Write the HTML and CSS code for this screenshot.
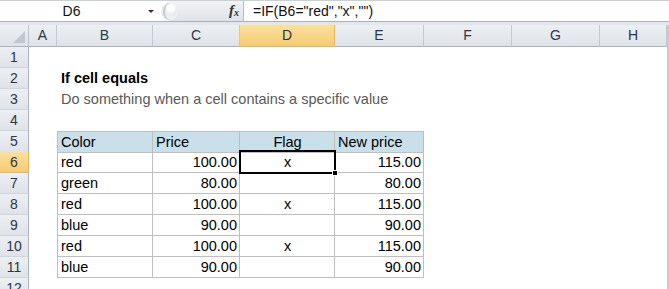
FILE: index.html
```html
<!DOCTYPE html>
<html>
	<head>
		<meta charset="utf-8" />
		<title>If cell equals</title>
		<link rel="stylesheet" href="styles.css">
	</head>
	<body>

<div class="fbar">
    <div class="namebox">D6<span class="drop"></span></div>
    <div class="fxzone"><span class="knob"></span><span class="fx">f<i>x</i></span></div>
    <div class="formula">=IF(B6="red","x","")</div>
</div>
<div class="gap"></div>

<div class="sheet">
    <div class="row head">
        <div class="corner"><span class="tri"></span></div>
        <div class="col">A</div>
        <div class="col">B</div>
        <div class="col">C</div>
        <div class="col on">D</div>
        <div class="col">E</div>
        <div class="col">F</div>
        <div class="col">G</div>
        <div class="col">H</div>
    </div>
    <div class="row"><div class="rh">1</div></div>
    <div class="row"><div class="rh">2</div><div></div><div class="title">If cell equals</div></div>
    <div class="row"><div class="rh">3</div><div></div><div class="sub">Do something when a cell contains a specific value</div></div>
    <div class="row"><div class="rh">4</div></div>
    <div class="row thead">
        <div class="rh">5</div><div></div>
        <div class="c first">Color</div>
        <div class="c">Price</div>
        <div class="c mid">Flag</div>
        <div class="c">New price</div>
    </div>
    <div class="row">
        <div class="rh on">6</div><div></div>
        <div class="c first">red</div>
        <div class="c num">100.00</div>
        <div class="c mid sel">x<span class="frame"></span><span class="handle"></span></div>
        <div class="c num">115.00</div>
    </div>
    <div class="row">
        <div class="rh">7</div><div></div>
        <div class="c first">green</div>
        <div class="c num">80.00</div>
        <div class="c mid"></div>
        <div class="c num">80.00</div>
    </div>
    <div class="row">
        <div class="rh">8</div><div></div>
        <div class="c first">red</div>
        <div class="c num">100.00</div>
        <div class="c mid">x</div>
        <div class="c num">115.00</div>
    </div>
    <div class="row">
        <div class="rh">9</div><div></div>
        <div class="c first">blue</div>
        <div class="c num">90.00</div>
        <div class="c mid"></div>
        <div class="c num">90.00</div>
    </div>
    <div class="row">
        <div class="rh">10</div><div></div>
        <div class="c first">red</div>
        <div class="c num">100.00</div>
        <div class="c mid">x</div>
        <div class="c num">115.00</div>
    </div>
    <div class="row">
        <div class="rh">11</div><div></div>
        <div class="c first">blue</div>
        <div class="c num">90.00</div>
        <div class="c mid"></div>
        <div class="c num">90.00</div>
    </div>
    <div class="row"><div class="rh">12</div></div>
</div>

	</body>
</html>
```

FILE: styles.css
```css
* {
    margin: 0;
    padding: 0;
    box-sizing: border-box;
}
body {
    width: 669px;
    height: 289px;
    overflow: hidden;
    background: #fff;
    font-family: "Liberation Sans", Arial, sans-serif;
    color: #000;
}

/* formula bar */
.fbar {
    display: flex;
    height: 22px;
    border-top: 1px solid #c9cfd6;
    border-bottom: 1px solid #a9b1bb;
    background: #fff;
}
.namebox {
    position: relative;
    width: 161px;
    padding-right: 18px;
    text-align: center;
    font-size: 14px;
    line-height: 20px;
    color: #111;
}
.drop {
    position: absolute;
    right: 7px;
    top: 9px;
    border-left: 3px solid transparent;
    border-right: 3px solid transparent;
    border-top: 3px solid #333;
}
.fxzone {
    display: flex;
    align-items: center;
    justify-content: space-between;
    width: 83px;
    padding: 0 4px 0 2px;
    background: linear-gradient(#f1f3f5, #dfe3e8);
    border-radius: 10px 0 0 10px;
    border-right: 1px solid #b4bcc6;
}
.knob {
    width: 15px;
    height: 17px;
    border-radius: 50%;
    border-left: 2px solid #c3c8cf;
    background: radial-gradient(circle at 45% 30%, #fff 0, #fff 3px, #e9ecef 6px, #f4f5f7 100%);
}
.fx {
    font-family: "Liberation Serif", serif;
    font-style: italic;
    font-weight: bold;
    font-size: 15px;
    color: #333;
    line-height: 18px;
}
.fx i {
    font-size: 10px;
    vertical-align: -1px;
}
.formula {
    flex: 1;
    padding-left: 9px;
    font-size: 14px;
    line-height: 20px;
    color: #111;
}
.gap {
    height: 3px;
    background: #e3e7ec;
}

/* grid */
.sheet {
    width: 669px;
    border-right: 2px solid #c6ccd4;
}
.row {
    display: grid;
    grid-template-columns: 29px 28px 96px 87px 95px 89px 88px 88px 67px;
    height: 21px;
    font-size: 14.5px;
    line-height: 20px;
}
.row.head {
    height: 22px;
}
.corner,
.col,
.rh {
    background: linear-gradient(#eceff3, #dfe3e9);
    color: #2c3645;
    text-align: center;
    font-size: 14px;
}
.corner {
    position: relative;
    border-right: 1px solid #bcc3cc;
    border-bottom: 1px solid #aab3be;
}
.tri {
    position: absolute;
    right: 3px;
    bottom: 3px;
    border-left: 12px solid transparent;
    border-bottom: 12px solid #c1c7cf;
}
.col {
    border-right: 1px solid #c2c9d2;
    border-bottom: 1px solid #aab3be;
    line-height: 21px;
}
.rh {
    border-right: 1px solid #aab3be;
    border-bottom: 1px solid #cfd5dc;
}
.col.on,
.rh.on {
    background: linear-gradient(#fae0a0, #f5cb72);
    border-color: #e9b451;
}

.title {
    font-weight: bold;
    padding-left: 4px;
    white-space: nowrap;
}
.sub {
    color: #595959;
    padding-left: 4px;
    white-space: nowrap;
}

/* table */
.c {
    border-right: 1px solid #bfbfbf;
    border-bottom: 1px solid #bfbfbf;
    padding: 0 2px 0 3px;
    white-space: nowrap;
}
.c.first {
    border-left: 1px solid #bfbfbf;
}
.thead .c {
    background: #c9dfea;
    border-top: 1px solid #bfbfbf;
}
.num {
    text-align: right;
}
.mid {
    text-align: center;
}
.sel {
    position: relative;
}
.frame {
    position: absolute;
    left: -1px;
    top: -2px;
    right: -2px;
    bottom: -2px;
    border: 2.5px solid #000;
}
.handle {
    position: absolute;
    right: -4px;
    bottom: -4px;
    width: 6px;
    height: 6px;
    background: #000;
    border: 1px solid #fff;
}
```
